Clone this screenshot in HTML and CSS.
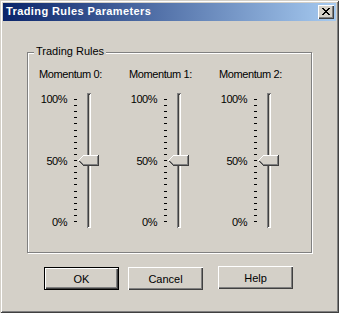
FILE: index.html
```html
<!DOCTYPE html>
<html>
<head>
<meta charset="utf-8">
<title>Trading Rules Parameters</title>
<link rel="stylesheet" href="styles.css">
</head>
<body>
<div class="window">
  <div class="titlebar">
    <span class="title">Trading Rules Parameters</span>
    <button class="close" aria-label="Close">
      <svg width="8" height="7" viewBox="0 0 8 7" shape-rendering="crispEdges">
        <rect x="0" y="0" width="2" height="1"/><rect x="6" y="0" width="2" height="1"/>
        <rect x="1" y="1" width="2" height="1"/><rect x="5" y="1" width="2" height="1"/>
        <rect x="2" y="2" width="4" height="1"/>
        <rect x="3" y="3" width="2" height="1"/>
        <rect x="2" y="4" width="4" height="1"/>
        <rect x="1" y="5" width="2" height="1"/><rect x="5" y="5" width="2" height="1"/>
        <rect x="0" y="6" width="2" height="1"/><rect x="6" y="6" width="2" height="1"/>
      </svg>
    </button>
  </div>
  <div class="client">
    <fieldset class="group">
      <legend>Trading Rules</legend>
      <div class="columns">
        <div class="col">
          <div class="caption">Momentum 0:</div>
          <div class="slider">
            <div class="scale"><span>100%</span><span>50%</span><span>0%</span></div>
            <svg class="ticks" width="3" height="135" viewBox="0 0 3 135" shape-rendering="crispEdges">
              <path d="M0 6.5h3M0 12.5h3M0 18.5h3M0 24.5h3M0 30.5h3M0 37.5h3M0 43.5h3M0 49.5h3M0 55.5h3M0 61.5h3M0 67.5h3M0 73.5h3M0 79.5h3M0 85.5h3M0 91.5h3M0 98.5h3M0 104.5h3M0 110.5h3M0 116.5h3M0 122.5h3M0 128.5h3" stroke="#000" stroke-width="1"/>
            </svg>
            <div class="track">
              <div class="thumb" style="top:62px">
                <svg width="21" height="11" viewBox="0 0 21 11" shape-rendering="crispEdges">
                  <polygon points="5,0 21,0 21,11 5,11 0,5.5 " fill="#d4d0c8"/>
                  <g fill="#ffffff"><rect x="5" y="0" width="15" height="1"/><rect x="4" y="1" width="1" height="1"/><rect x="3" y="2" width="1" height="1"/><rect x="2" y="3" width="1" height="1"/><rect x="1" y="4" width="1" height="1"/><rect x="0" y="5" width="1" height="1"/></g>
                  <g fill="#808080"><rect x="19" y="1" width="1" height="9"/><rect x="5" y="9" width="14" height="1"/><rect x="2" y="6" width="1" height="1"/><rect x="3" y="7" width="1" height="1"/><rect x="4" y="8" width="1" height="1"/></g>
                  <g fill="#404040"><rect x="20" y="0" width="1" height="11"/><rect x="5" y="10" width="15" height="1"/><rect x="1" y="6" width="1" height="1"/><rect x="2" y="7" width="1" height="1"/><rect x="3" y="8" width="1" height="1"/><rect x="4" y="9" width="1" height="1"/></g>
                </svg>
              </div>
            </div>
          </div>
        </div>
        <div class="col">
          <div class="caption">Momentum 1:</div>
          <div class="slider">
            <div class="scale"><span>100%</span><span>50%</span><span>0%</span></div>
            <svg class="ticks" width="3" height="135" viewBox="0 0 3 135" shape-rendering="crispEdges">
              <path d="M0 6.5h3M0 12.5h3M0 18.5h3M0 24.5h3M0 30.5h3M0 37.5h3M0 43.5h3M0 49.5h3M0 55.5h3M0 61.5h3M0 67.5h3M0 73.5h3M0 79.5h3M0 85.5h3M0 91.5h3M0 98.5h3M0 104.5h3M0 110.5h3M0 116.5h3M0 122.5h3M0 128.5h3" stroke="#000" stroke-width="1"/>
            </svg>
            <div class="track">
              <div class="thumb" style="top:62px">
                <svg width="21" height="11" viewBox="0 0 21 11" shape-rendering="crispEdges">
                  <polygon points="5,0 21,0 21,11 5,11 0,5.5 " fill="#d4d0c8"/>
                  <g fill="#ffffff"><rect x="5" y="0" width="15" height="1"/><rect x="4" y="1" width="1" height="1"/><rect x="3" y="2" width="1" height="1"/><rect x="2" y="3" width="1" height="1"/><rect x="1" y="4" width="1" height="1"/><rect x="0" y="5" width="1" height="1"/></g>
                  <g fill="#808080"><rect x="19" y="1" width="1" height="9"/><rect x="5" y="9" width="14" height="1"/><rect x="2" y="6" width="1" height="1"/><rect x="3" y="7" width="1" height="1"/><rect x="4" y="8" width="1" height="1"/></g>
                  <g fill="#404040"><rect x="20" y="0" width="1" height="11"/><rect x="5" y="10" width="15" height="1"/><rect x="1" y="6" width="1" height="1"/><rect x="2" y="7" width="1" height="1"/><rect x="3" y="8" width="1" height="1"/><rect x="4" y="9" width="1" height="1"/></g>
                </svg>
              </div>
            </div>
          </div>
        </div>
        <div class="col">
          <div class="caption">Momentum 2:</div>
          <div class="slider">
            <div class="scale"><span>100%</span><span>50%</span><span>0%</span></div>
            <svg class="ticks" width="3" height="135" viewBox="0 0 3 135" shape-rendering="crispEdges">
              <path d="M0 6.5h3M0 12.5h3M0 18.5h3M0 24.5h3M0 30.5h3M0 37.5h3M0 43.5h3M0 49.5h3M0 55.5h3M0 61.5h3M0 67.5h3M0 73.5h3M0 79.5h3M0 85.5h3M0 91.5h3M0 98.5h3M0 104.5h3M0 110.5h3M0 116.5h3M0 122.5h3M0 128.5h3" stroke="#000" stroke-width="1"/>
            </svg>
            <div class="track">
              <div class="thumb" style="top:62px">
                <svg width="21" height="11" viewBox="0 0 21 11" shape-rendering="crispEdges">
                  <polygon points="5,0 21,0 21,11 5,11 0,5.5 " fill="#d4d0c8"/>
                  <g fill="#ffffff"><rect x="5" y="0" width="15" height="1"/><rect x="4" y="1" width="1" height="1"/><rect x="3" y="2" width="1" height="1"/><rect x="2" y="3" width="1" height="1"/><rect x="1" y="4" width="1" height="1"/><rect x="0" y="5" width="1" height="1"/></g>
                  <g fill="#808080"><rect x="19" y="1" width="1" height="9"/><rect x="5" y="9" width="14" height="1"/><rect x="2" y="6" width="1" height="1"/><rect x="3" y="7" width="1" height="1"/><rect x="4" y="8" width="1" height="1"/></g>
                  <g fill="#404040"><rect x="20" y="0" width="1" height="11"/><rect x="5" y="10" width="15" height="1"/><rect x="1" y="6" width="1" height="1"/><rect x="2" y="7" width="1" height="1"/><rect x="3" y="8" width="1" height="1"/><rect x="4" y="9" width="1" height="1"/></g>
                </svg>
              </div>
            </div>
          </div>
        </div>
      </div>
    </fieldset>
    <div class="buttons">
      <button class="btn default">OK</button>
      <button class="btn cancel">Cancel</button>
      <button class="btn help">Help</button>
    </div>
  </div>
</div>
</body>
</html>
```

FILE: styles.css
```css
html, body {
  margin: 0;
  padding: 0;
  background: #d4d0c8;
}

body {
  font-family: "Liberation Sans", Arial, sans-serif;
  font-size: 11px;
  color: #000;
}

.window {
  box-sizing: border-box;
  width: 339px;
  height: 313px;
  padding: 3px;
  background: #d4d0c8;
  box-shadow: inset 1px 1px 0 #d4d0c8, inset -1px -1px 0 #404040,
              inset 2px 2px 0 #ffffff, inset -2px -2px 0 #808080;
  display: flex;
  flex-direction: column;
}

.titlebar {
  height: 18px;
  margin-bottom: 1px;
  display: flex;
  align-items: flex-start;
  background: linear-gradient(to right, #0a246a, #a6caf0);
}

.title {
  color: #fff;
  font-weight: bold;
  line-height: 16px;
  padding-left: 3px;
  letter-spacing: 0.4px;
  white-space: nowrap;
}

.close {
  margin: 2px 2px 0 auto;
  width: 16px;
  height: 14px;
  padding: 0;
  border: 0;
  background: #d4d0c8;
  box-shadow: inset 1px 1px 0 #ffffff, inset -1px -1px 0 #404040,
              inset -2px -2px 0 #808080;
  display: flex;
  align-items: flex-start;
  justify-content: flex-start;
}

.close svg {
  display: block;
  margin: 3px 0 0 4px;
  fill: #000;
}

.client {
  flex: 1;
  padding: 23px 0 0 24px;
}

.group {
  box-sizing: border-box;
  width: 285px;
  margin: 0;
  padding: 9px 0 24px 6px;
  border: 1px solid #808080;
  box-shadow: 1px 1px 0 #ffffff, inset 1px 1px 0 #ffffff;
  min-inline-size: 0;
}

.group legend {
  padding: 0 2px 2px;
  line-height: 12px;
  color: #000;
  background: #d4d0c8;
}

.columns {
  display: flex;
  margin-left: 4px;
}

.col {
  width: 90px;
}

.caption {
  line-height: 13px;
  padding-left: 1px;
  margin-bottom: 12px;
  letter-spacing: -0.4px;
  white-space: nowrap;
}

.slider {
  display: flex;
  align-items: flex-start;
  height: 135px;
}

.scale {
  width: 29px;
  height: 135px;
  display: flex;
  flex-direction: column;
  justify-content: space-between;
  align-items: flex-end;
  line-height: 12px;
  letter-spacing: -0.5px;
}

.ticks {
  display: block;
  margin-left: 7px;
}

.track {
  position: relative;
  margin-left: 10px;
  width: 4px;
  height: 135px;
  background: #d4d0c8;
  box-shadow: inset 1px 1px 0 #808080, inset -1px -1px 0 #ffffff,
              inset 2px 2px 0 #404040;
}

.thumb {
  position: absolute;
  left: -9px;
  width: 21px;
  height: 11px;
}

.thumb svg {
  display: block;
}

.buttons {
  display: flex;
  align-items: flex-start;
  margin-top: 14px;
  padding-left: 17px;
}

.btn {
  box-sizing: border-box;
  width: 75px;
  height: 23px;
  padding: 0;
  margin: 0;
  border: 0;
  background: #d4d0c8;
  font-family: "Liberation Sans", Arial, sans-serif;
  font-size: 11px;
  color: #000;
  box-shadow: inset 1px 1px 0 #ffffff, inset -1px -1px 0 #404040,
              inset -2px -2px 0 #808080;
}

.btn.default {
  border: 1px solid #000;
}

.btn.cancel {
  margin-left: 9px;
}

.btn.help {
  margin-left: 15px;
  margin-top: -1px;
}
```
